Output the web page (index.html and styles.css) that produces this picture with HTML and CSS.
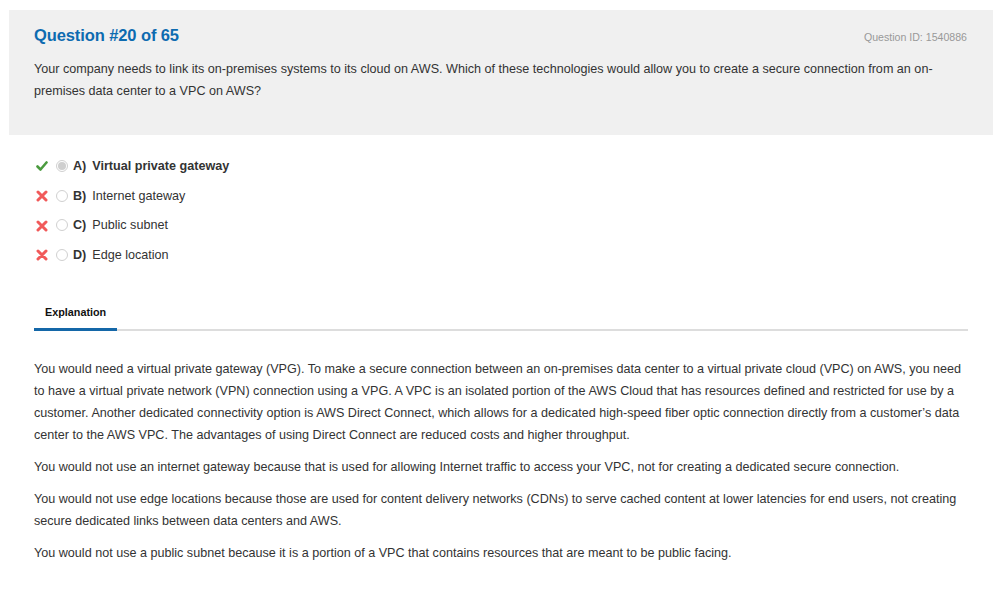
FILE: index.html
```html
<!DOCTYPE html>
<html>
<head>
<meta charset="utf-8">
<link rel="stylesheet" href="styles.css">
</head>
<body>
<div class="panel">
  <div class="head">
    <h1 class="title">Question #20 of 65</h1>
    <span class="qid">Question ID: 1540886</span>
  </div>
  <p class="qtext">Your company needs to link its on-premises systems to its cloud on AWS. Which of these technologies would allow you to create a secure connection from an on-premises data center to a VPC on AWS?</p>
</div>
<ul class="options">
  <li class="opt correct">
    <svg class="mark" width="12" height="12" viewBox="0 0 12 12"><path d="M1.5 6.5 L4.5 9.5 L10.5 2.5" fill="none" stroke="#4b9b3f" stroke-width="2.6" stroke-linecap="round" stroke-linejoin="round"/></svg>
    <span class="radio checked"></span>
    <span class="lbl"><b class="key">A)</b>Virtual private gateway</span>
  </li>
  <li class="opt">
    <svg class="mark" width="12" height="12" viewBox="0 0 12 12"><path d="M2 2 L10 10 M10 2 L2 10" fill="none" stroke="#f15a5a" stroke-width="3" stroke-linecap="round"/></svg>
    <span class="radio"></span>
    <span class="lbl"><b class="key">B)</b>Internet gateway</span>
  </li>
  <li class="opt">
    <svg class="mark" width="12" height="12" viewBox="0 0 12 12"><path d="M2 2 L10 10 M10 2 L2 10" fill="none" stroke="#f15a5a" stroke-width="3" stroke-linecap="round"/></svg>
    <span class="radio"></span>
    <span class="lbl"><b class="key">C)</b>Public subnet</span>
  </li>
  <li class="opt">
    <svg class="mark" width="12" height="12" viewBox="0 0 12 12"><path d="M2 2 L10 10 M10 2 L2 10" fill="none" stroke="#f15a5a" stroke-width="3" stroke-linecap="round"/></svg>
    <span class="radio"></span>
    <span class="lbl"><b class="key">D)</b>Edge location</span>
  </li>
</ul>
<div class="tabs">
  <div class="tab active">Explanation</div>
</div>
<div class="expl">
  <p>You would need a virtual private gateway (VPG). To make a secure connection between an on-premises data center to a virtual private cloud (VPC) on AWS, you need to have a virtual private network (VPN) connection using a VPG. A VPC is an isolated portion of the AWS Cloud that has resources defined and restricted for use by a customer. Another dedicated connectivity option is AWS Direct Connect, which allows for a dedicated high-speed fiber optic connection directly from a customer’s data center to the AWS VPC. The advantages of using Direct Connect are reduced costs and higher throughput.</p>
  <p>You would not use an internet gateway because that is used for allowing Internet traffic to access your VPC, not for creating a dedicated secure connection.</p>
  <p>You would not use edge locations because those are used for content delivery networks (CDNs) to serve cached content at lower latencies for end users, not creating secure dedicated links between data centers and AWS.</p>
  <p>You would not use a public subnet because it is a portion of a VPC that contains resources that are meant to be public facing.</p>
</div>
</body>
</html>
```

FILE: styles.css
```css
* { box-sizing: border-box; }
body {
  margin: 0;
  background: #fff;
  font-family: "Liberation Sans", Arial, sans-serif;
  color: #333;
  font-size: 12.6px;
}
.panel {
  margin: 10px 8px 0 9px;
  height: 125px;
  background: #f0f0f0;
  padding: 14px 26px 0 25px;
}
.head {
  display: flex;
  justify-content: space-between;
  align-items: baseline;
}
.title {
  margin: 0;
  font-size: 16.5px;
  letter-spacing: -0.1px;
  line-height: 23px;
  font-weight: bold;
  color: #0d6bb0;
}
.qid {
  font-size: 10.6px;
  color: #999;
}
.qtext {
  margin: 11px 0 0;
  line-height: 22px;
}
.options {
  list-style: none;
  margin: 16px 0 0;
  padding: 0 0 0 36px;
}
.opt {
  display: flex;
  align-items: center;
  height: 29.7px;
}
.mark { flex: none; margin-top: 1px; }
.radio {
  width: 12px;
  height: 12px;
  border: 1px solid #d0d0d0;
  border-radius: 50%;
  background: #fff;
  margin-left: 8px;
  display: flex;
  align-items: center;
  justify-content: center;
}
.radio.checked::after {
  content: "";
  width: 8px;
  height: 8px;
  border-radius: 50%;
  background: #cfcfcf;
}
.lbl { margin-left: 5px; }
.key { margin-right: 6px; }
.correct .lbl { font-weight: bold; }
.tabs {
  margin: 35px 33px 0 34px;
  border-bottom: 2px solid #ddd;
  display: flex;
}
.tab {
  font-size: 10.8px;
  font-weight: bold;
  color: #111;
  width: 83px;
  padding: 0 0 9px 11px;
  line-height: 14px;
  margin-bottom: -2px;
}
.tab.active { border-bottom: 3px solid #1467a8; }
.expl {
  margin: 27px 33px 0 34px;
}
.expl p {
  margin: 0 0 10px;
  line-height: 22px;
}
```
